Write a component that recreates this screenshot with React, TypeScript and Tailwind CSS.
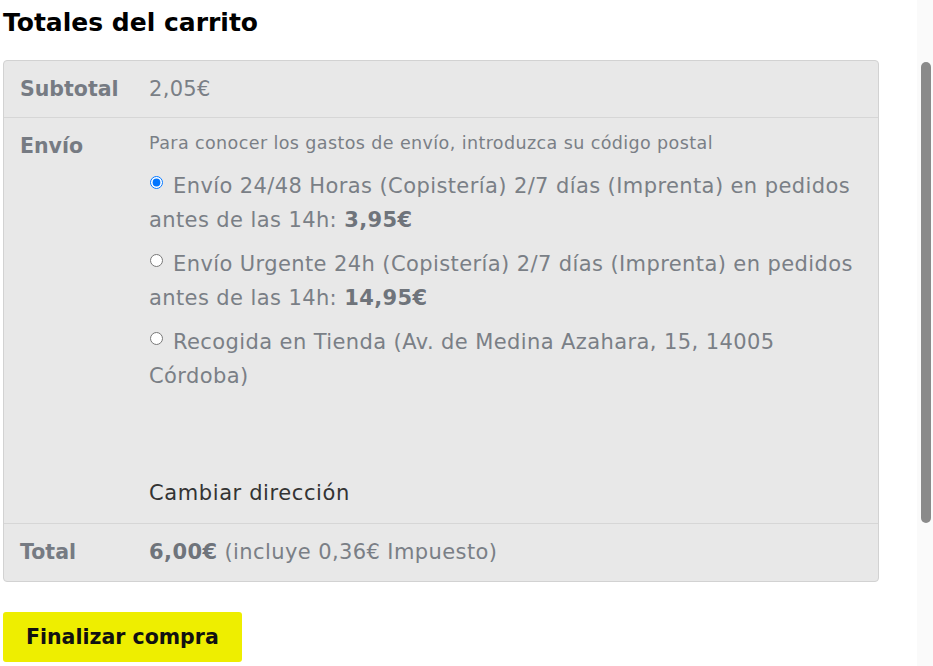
import type { ReactNode } from 'react';

const font = { fontFamily: '"DejaVu Sans", "Liberation Sans", sans-serif' };

type Option = { id: string; label: string; price?: string; checked?: boolean };

const options: Option[] = [
  {
    id: 'flat',
    label: 'Envío 24/48 Horas (Copistería) 2/7 días (Imprenta) en pedidos antes de las 14h: ',
    price: '3,95€',
    checked: true,
  },
  {
    id: 'urgent',
    label: 'Envío Urgente 24h (Copistería) 2/7 días (Imprenta) en pedidos antes de las 14h: ',
    price: '14,95€',
  },
  {
    id: 'pickup',
    label: 'Recogida en Tienda (Av. de Medina Azahara, 15, 14005 Córdoba)',
  },
];

function Row({ label, children, last }: { label: string; children: ReactNode; last?: boolean }) {
  return (
    <div className={`flex items-center ${last ? '' : 'border-b border-[#d6d6d6]'}`}>
      <div className="w-[145px] shrink-0 pl-[16px] text-[20.5px] font-bold text-[#767b83]">{label}</div>
      <div className="flex-1 pr-4">{children}</div>
    </div>
  );
}

export default function App() {
  return (
    <div className="flex h-[666px] w-full overflow-hidden bg-white" style={font}>
      <main className="flex-1 pl-[3px] pr-[38px]">
        <h2 className="pt-[6px] text-[25px] font-bold leading-[34px] text-black">Totales del carrito</h2>

        <div className="mt-[20px] rounded-[4px] border border-[#d2d2d2] bg-[#e8e8e8]">
          <Row label="Subtotal">
            <div className="text-[21px] leading-[56px] tracking-[0.3px] text-[#7a7f86]">2,05€</div>
          </Row>
          <div className="flex border-b border-[#d6d6d6]">
            <div className="w-[145px] shrink-0 pl-[16px] pt-[13px] text-[20.5px] font-bold leading-[30px] text-[#767b83]">
              Envío
            </div>
            <div className="flex-1 pr-4 pt-[13px] pb-[13px]">
              <p className="text-[17.5px] leading-[24px] tracking-[0.4px] text-[#7a7f86]">
                Para conocer los gastos de envío, introduzca su código postal
              </p>
              <ul className="mt-[14px] flex flex-col gap-[10px]">
                {options.map((o) => (
                  <li key={o.id} className="text-[21px] leading-[34px] tracking-[0.4px] text-[#7a7f86]">
                    <input
                      type="radio"
                      name="shipping"
                      defaultChecked={o.checked}
                      className="mr-[10px] ml-[1px] h-[13px] w-[13px] align-[4px] accent-[#0075ff]"
                    />
                    {o.label}
                    {o.price && <strong className="font-bold text-[#6f747b]">{o.price}</strong>}
                  </li>
                ))}
              </ul>
              <div className="mt-[83px] text-[21px] leading-[34px] tracking-[0.6px] text-[#333333]">
                Cambiar dirección
              </div>
            </div>
          </div>
          <Row label="Total" last>
            <div className="text-[21px] leading-[57px] tracking-[0.4px] text-[#7a7f86]">
              <strong className="font-bold text-[#6f747b]">6,00€</strong> (incluye 0,36€ Impuesto)
            </div>
          </Row>
        </div>

        <button className="mt-[30px] h-[50px] rounded-[3px] bg-[#eeee00] px-[23px] text-[20.5px] font-bold text-[#111111]">
          Finalizar compra
        </button>
      </main>

      <div className="w-[16px] shrink-0 bg-[#fafafa] pt-[62px] pl-[4px]">
        <div className="h-[461px] w-[10px] rounded-full bg-[#8a8a8a]" />
      </div>
    </div>
  );
}
